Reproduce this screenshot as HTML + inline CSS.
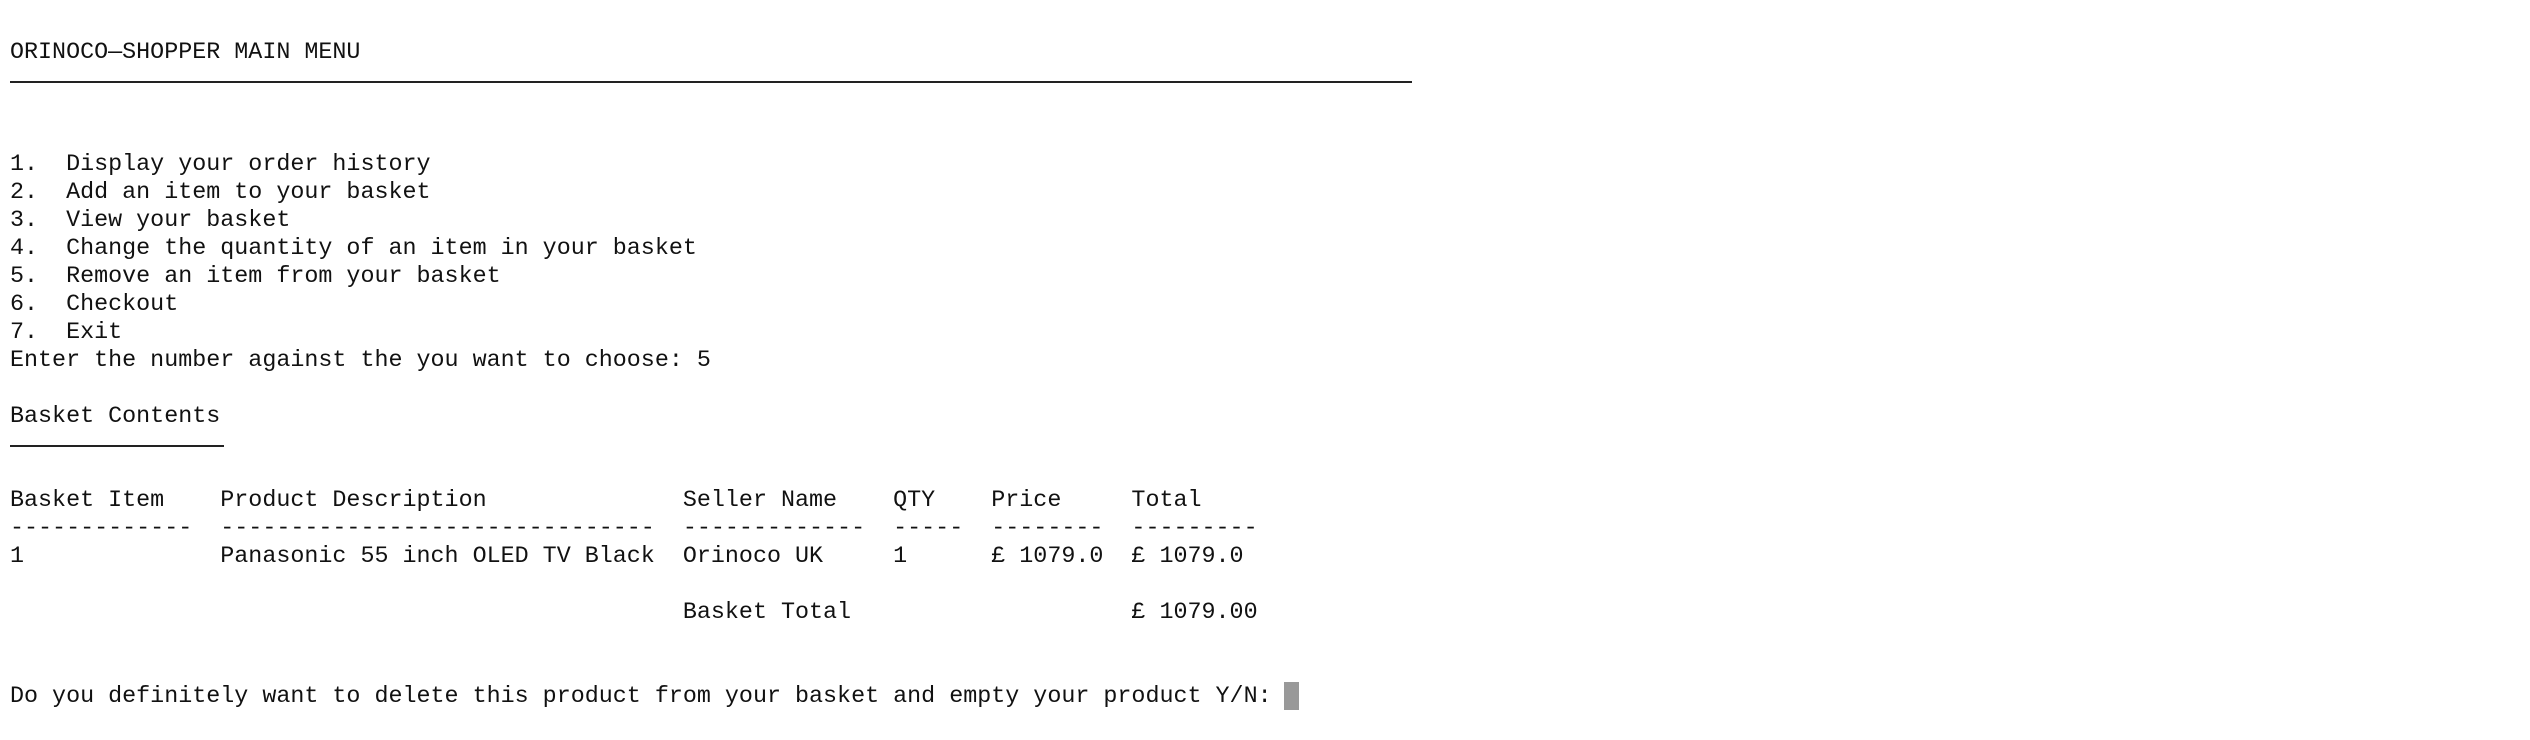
<!DOCTYPE html>
<html><head><meta charset="utf-8"><style>
html,body{margin:0;padding:0;background:#fff;width:2530px;height:740px;overflow:hidden;position:relative}
pre{position:absolute;left:10px;top:39px;margin:0;font-family:"Liberation Mono",monospace;font-size:23.36px;line-height:28px;color:#111}
.l{position:absolute;background:#222;height:2px}
.c{position:absolute;left:1284px;top:682px;width:15px;height:28px;background:#999}
</style></head><body>
<pre>ORINOCO—SHOPPER MAIN MENU



1.  Display your order history
2.  Add an item to your basket
3.  View your basket
4.  Change the quantity of an item in your basket
5.  Remove an item from your basket
6.  Checkout
7.  Exit
Enter the number against the you want to choose: 5

Basket Contents


Basket Item    Product Description              Seller Name    QTY    Price     Total
-------------  -------------------------------  -------------  -----  --------  ---------
1              Panasonic 55 inch OLED TV Black  Orinoco UK     1      £ 1079.0  £ 1079.0

                                                Basket Total                    £ 1079.00


Do you definitely want to delete this product from your basket and empty your product Y/N: </pre>
<div class="l" style="left:10px;top:81px;width:1402px"></div>
<div class="l" style="left:10px;top:445px;width:214px"></div>
<div class="c"></div>
</body></html>
